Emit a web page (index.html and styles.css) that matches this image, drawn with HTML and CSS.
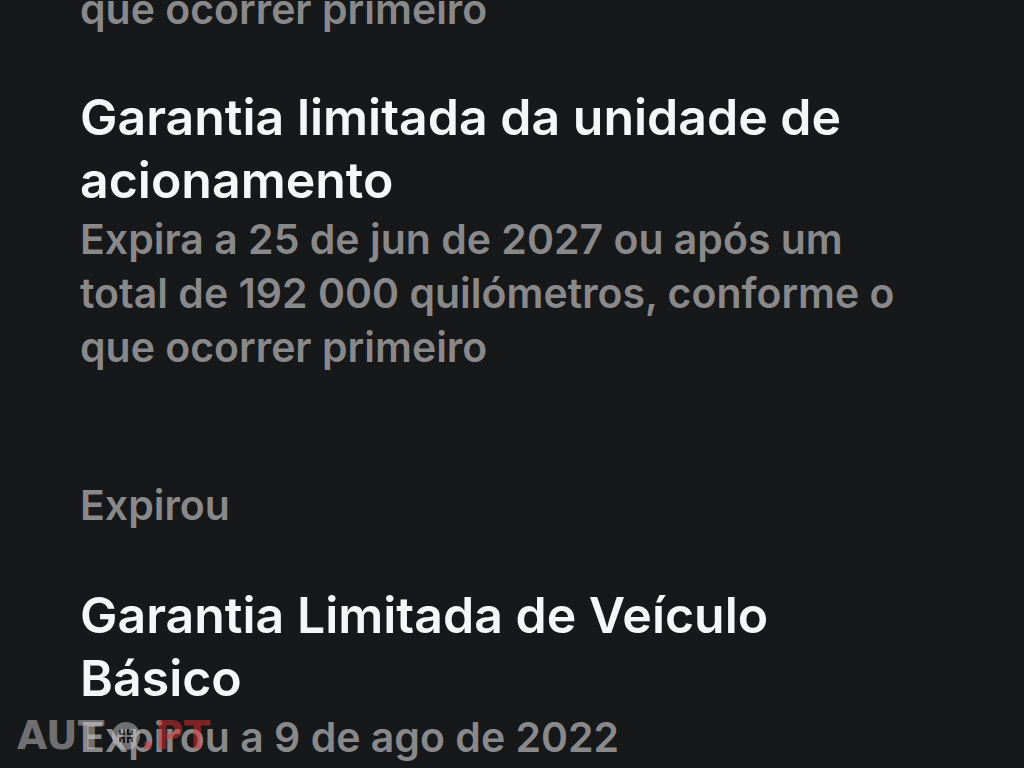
FILE: index.html
```html
<!DOCTYPE html>
<html lang="pt">
    <head>
        <meta charset="utf-8">
        <title>Garantias</title>
        <link rel="stylesheet" href="styles.css">
    </head>
    <body>
        <main>
            <section class="warranty clipped">
                <p>que ocorrer primeiro</p>
            </section>
            <section class="warranty">
                <h2>Garantia limitada da unidade de acionamento</h2>
                <p>Expira a 25 de jun de 2027 ou após um total de 192 000 quilómetros, conforme o que ocorrer primeiro</p>
            </section>
            <h3>Expirou</h3>
            <section class="warranty">
                <h2>Garantia Limitada de Veículo Básico</h2>
                <p>Expirou a 9 de ago de 2022</p>
            </section>
        </main>
        <div class="watermark">
            <span>AUT</span>
            <svg width="28" height="28" viewBox="0 0 28 28" aria-hidden="true">
                <circle cx="14" cy="14" r="14" fill="currentColor"/>
                <path d="M8 8v5M8 15v5M12 7v5h-3M16 7v5h3M12 21v-5h-3M16 21v-5h3M20 8v5M20 15v5" fill="none" stroke="#17181a" stroke-width="2"/>
            </svg>
            <span class="domain">.PT</span>
        </div>
    </body>
</html>
```

FILE: styles.css
```css
body {
    margin: 0;
    height: 100vh;
    overflow: hidden;
    background: #17181a;
    color: #89898b;
    font-family: Inter, sans-serif;
    font-weight: 600;
}
main {
    padding: 0 100px 0 80px;
}
h2 {
    margin: 0;
    color: #f5f6f8;
    font-size: 50px;
    font-weight: 600;
    line-height: 63px;
}
p {
    margin: 0;
    font-size: 41px;
    line-height: 54px;
}
h3 {
    margin: 104px 0 52px;
    font-size: 41px;
    font-weight: 600;
    line-height: 54px;
}
.warranty.clipped {
    margin: -18px 0 50px;
}
.watermark {
    position: absolute;
    left: 17px;
    bottom: 10px;
    display: flex;
    align-items: center;
    color: #c8c8ca;
    font-family: "DejaVu Sans", sans-serif;
    font-size: 39px;
    font-weight: 700;
    line-height: 44px;
    opacity: 0.5;
}
.watermark svg {
    margin-left: 8px;
}
.watermark .domain {
    color: #e03030;
}
```
